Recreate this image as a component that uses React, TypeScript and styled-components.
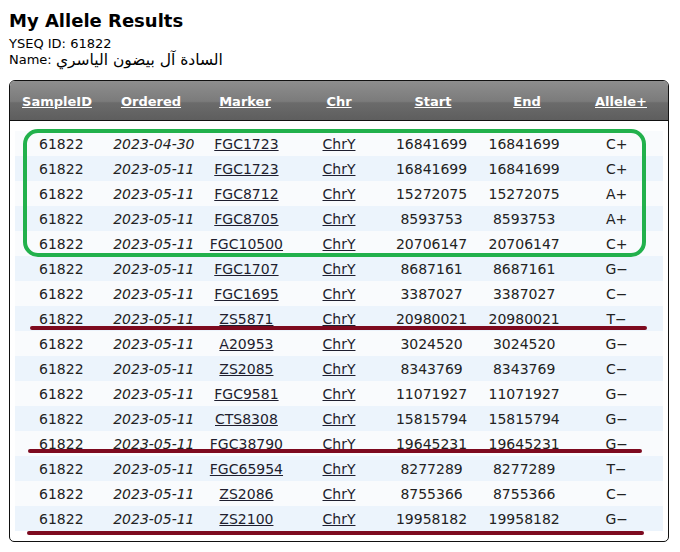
import React from "react";
import styled, { createGlobalStyle } from "styled-components";

const Global = createGlobalStyle`
  body {
    margin: 8px;
    background: #ffffff;
    font-family: "DejaVu Sans", Verdana, sans-serif;
    color: #222;
  }
`;

const Title = styled.h1`
  margin: 0 0 3px 1px;
  font-size: 18px;
  line-height: 25px;
  font-weight: bold;
  color: #000;
`;

const Meta = styled.div`
  font-size: 13px;
  line-height: 16px;
  height: 16px;
  margin-left: 1px;
  color: #000;
`;

const Arabic = styled.span`
  font-size: 15.5px;
  line-height: 16px;
  vertical-align: top;
`;

const Panel = styled.div`
  position: relative;
  margin: 12px 0 0 1px;
  width: 658px;
  border: 1px solid #111;
  border-radius: 6px 6px 5px 5px;
  overflow: hidden;
  background: #fff;
`;

const cols = "repeat(7, 1fr)";

const HeaderRow = styled.div`
  display: grid;
  grid-template-columns: ${cols};
  height: 39px;
  align-items: center;
  border-bottom: 1px solid #111;
  background: linear-gradient(
    #8e8e8e 0%,
    #7b7b7b 52%,
    #6b6b6b 56%,
    #5e5e5e 100%
  );
`;

const HeadCell = styled.a`
  justify-self: center;
  padding-top: 1px;
  color: #fff;
  font-size: 13px;
  font-weight: bold;
  text-decoration: underline;
  cursor: pointer;
`;

const Body = styled.div`
  padding: 10px 5px 10px 5px;
`;

const Row = styled.div<{ $alt: boolean }>`
  display: grid;
  grid-template-columns: ${cols};
  height: 25px;
  align-items: center;
  background: ${(p) => (p.$alt ? "#ecf4fc" : "#f9fbfd")};
  font-size: 14px;
`;

const Cell = styled.span<{ $italic?: boolean }>`
  justify-self: center;
  font-style: ${(p) => (p.$italic ? "italic" : "normal")};
  color: #222;
`;

const LinkCell = styled.a`
  justify-self: center;
  color: #1e1e2e;
  text-decoration: underline;
`;

const GreenBox = styled.div`
  position: absolute;
  left: 13px;
  top: 48px;
  width: 615px;
  height: 120px;
  border: 4px solid #22b14c;
  border-radius: 15px;
  pointer-events: none;
`;

const RedLine = styled.div<{ $top: number; $left: number; $width: number }>`
  position: absolute;
  top: ${(p) => p.$top}px;
  left: ${(p) => p.$left}px;
  width: ${(p) => p.$width}px;
  height: 4px;
  border-radius: 2px;
  background: #7d0a1f;
  pointer-events: none;
`;

type R = [string, string, string, string, string];

const rows: R[] = [
  ["2023-04-30", "FGC1723", "16841699", "16841699", "C+"],
  ["2023-05-11", "FGC1723", "16841699", "16841699", "C+"],
  ["2023-05-11", "FGC8712", "15272075", "15272075", "A+"],
  ["2023-05-11", "FGC8705", "8593753", "8593753", "A+"],
  ["2023-05-11", "FGC10500", "20706147", "20706147", "C+"],
  ["2023-05-11", "FGC1707", "8687161", "8687161", "G−"],
  ["2023-05-11", "FGC1695", "3387027", "3387027", "C−"],
  ["2023-05-11", "ZS5871", "20980021", "20980021", "T−"],
  ["2023-05-11", "A20953", "3024520", "3024520", "G−"],
  ["2023-05-11", "ZS2085", "8343769", "8343769", "C−"],
  ["2023-05-11", "FGC9581", "11071927", "11071927", "G−"],
  ["2023-05-11", "CTS8308", "15815794", "15815794", "G−"],
  ["2023-05-11", "FGC38790", "19645231", "19645231", "G−"],
  ["2023-05-11", "FGC65954", "8277289", "8277289", "T−"],
  ["2023-05-11", "ZS2086", "8755366", "8755366", "C−"],
  ["2023-05-11", "ZS2100", "19958182", "19958182", "G−"],
];

const headers = ["SampleID", "Ordered", "Marker", "Chr", "Start", "End", "Allele+"];

export default function App() {
  return (
    <>
      <Global />
      <Title>My Allele Results</Title>
      <Meta>YSEQ ID: 61822</Meta>
      <Meta>
        Name: <Arabic dir="rtl">السادة آل بيضون الياسري</Arabic>
      </Meta>
      <Panel>
        <HeaderRow>
          {headers.map((h) => (
            <HeadCell key={h}>{h}</HeadCell>
          ))}
        </HeaderRow>
        <Body>
          {rows.map((r, i) => (
            <Row key={i} $alt={i % 2 === 1}>
              <Cell>61822</Cell>
              <Cell $italic>{r[0]}</Cell>
              <LinkCell>{r[1]}</LinkCell>
              <LinkCell>ChrY</LinkCell>
              <Cell>{r[2]}</Cell>
              <Cell>{r[3]}</Cell>
              <Cell>{r[4]}</Cell>
            </Row>
          ))}
        </Body>
        <GreenBox />
        <RedLine $top={245} $left={20} $width={617} />
        <RedLine $top={368} $left={18} $width={614} />
        <RedLine $top={450} $left={17} $width={617} />
      </Panel>
    </>
  );
}
